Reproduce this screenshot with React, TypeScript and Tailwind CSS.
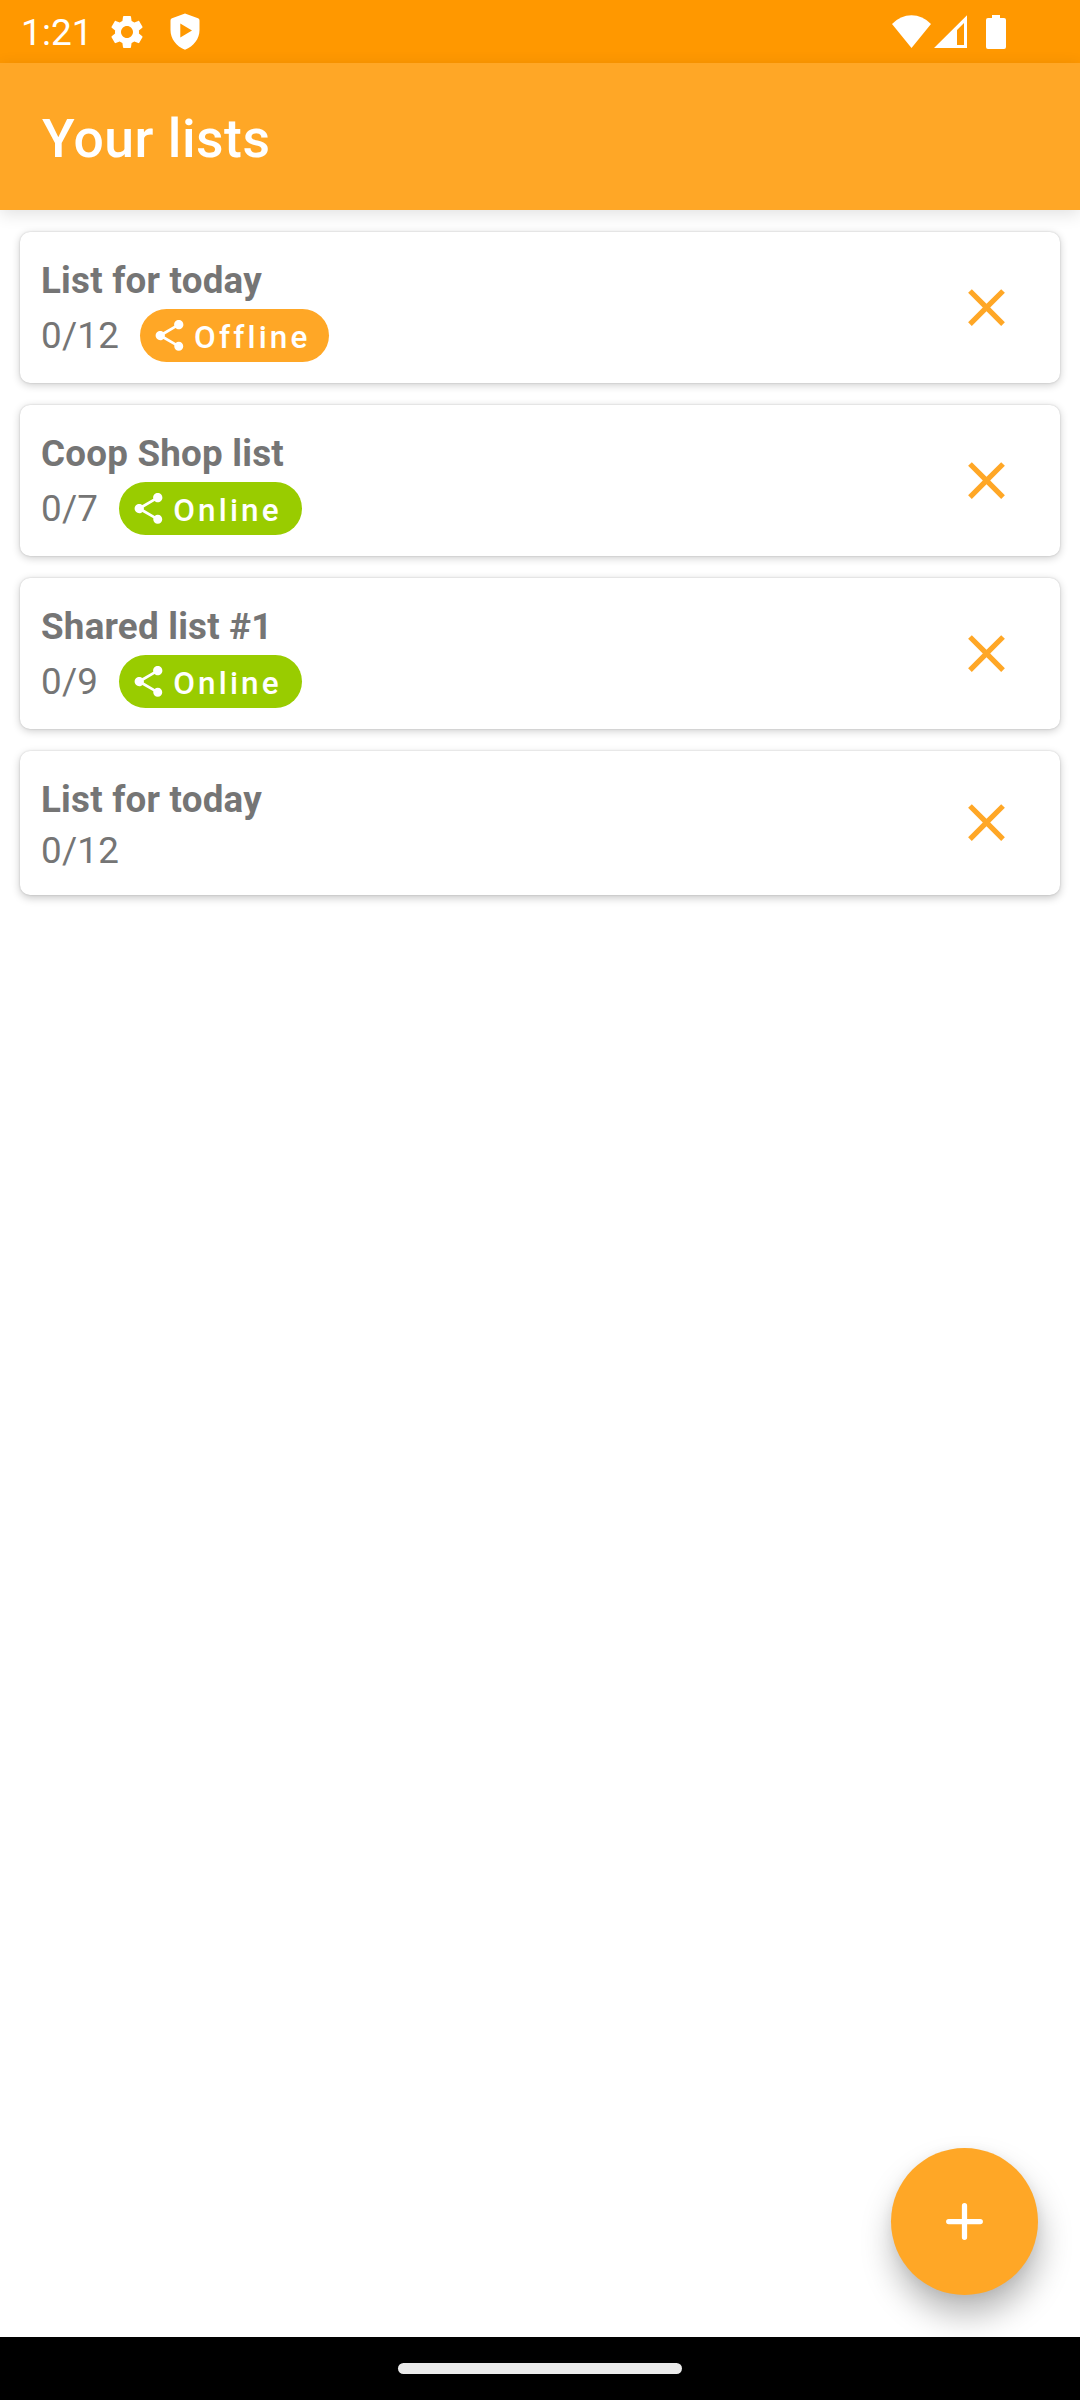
type ShareState = 'online' | 'offline' | null;

interface ShoppingList {
  id: number;
  title: string;
  count: string;
  share: ShareState;
}

const lists: ShoppingList[] = [
  { id: 1, title: 'List for today', count: '0/12', share: 'offline' },
  { id: 2, title: 'Coop Shop list', count: '0/7', share: 'online' },
  { id: 3, title: 'Shared list #1', count: '0/9', share: 'online' },
  { id: 4, title: 'List for today', count: '0/12', share: null },
];

function StatusBar() {
  return (
    <div className="flex h-[63px] shrink-0 items-center bg-[#ff9800] pr-[74px] pl-[21px] text-white">
      <span className="mt-[3px] w-[68px] text-[37px] leading-[44px] tracking-[0.1px]">1:21</span>
      <svg className="ml-[18px] size-[40px]" viewBox="0 0 24 24" fill="currentColor">
        <path d="M19.14 12.94c.04-.3.06-.61.06-.94 0-.32-.02-.64-.07-.94l2.03-1.58c.18-.14.23-.41.12-.61l-1.92-3.32c-.12-.22-.37-.29-.59-.22l-2.39.96c-.5-.38-1.03-.7-1.62-.94l-.36-2.54c-.04-.24-.24-.41-.48-.41h-3.84c-.24 0-.43.17-.47.41l-.36 2.54c-.59.24-1.13.57-1.62.94l-2.39-.96c-.22-.08-.47 0-.59.22L2.74 8.87c-.12.21-.08.47.12.61l2.03 1.58c-.05.3-.09.63-.09.94s.02.64.07.94l-2.03 1.58c-.18.14-.23.41-.12.61l1.92 3.32c.12.22.37.29.59.22l2.39-.96c.5.38 1.03.7 1.62.94l.36 2.54c.05.24.24.41.48.41h3.84c.24 0 .44-.17.47-.41l.36-2.54c.59-.24 1.13-.56 1.62-.94l2.39.96c.22.08.47 0 .59-.22l1.92-3.32c.12-.22.07-.47-.12-.61l-2.01-1.58zM12 15.6c-1.98 0-3.6-1.62-3.6-3.6s1.62-3.6 3.6-3.6 3.6 1.62 3.6 3.6-1.62 3.6-3.6 3.6z" />
      </svg>
      <svg className="ml-[23px] h-[37px] w-[30px]" viewBox="0 0 30 37" fill="currentColor">
        <path fillRule="evenodd" d="M15 .5 28 5.2Q29.5 5.8 29.5 7.4V17C29.5 25.5 23.8 33.6 15 36.7 6.2 33.6.5 25.5.5 17V7.4Q.5 5.8 2 5.2ZM10.3 10.5V24.5L22 17.5Z" />
      </svg>
      <div className="ml-auto flex items-start">
        <svg className="h-[34px] w-[39px]" viewBox="0 0 39 34" fill="currentColor">
          <path d="M0 9Q8.5.3 19.5.3T39 9L19.5 33Z" />
        </svg>
        <svg className="ml-[3px] h-[34px] w-[33px]" viewBox="0 0 33 34" fill="currentColor">
          <path fillRule="evenodd" d="M33 .3V33H0ZM30 8 23 15V30H30Z" />
        </svg>
        <svg className="ml-[19px] h-[34px] w-5" viewBox="0 0 20 34" fill="currentColor">
          <path d="M6 0h8v3h4q2 0 2 2v27q0 2-2 2H2q-2 0-2-2V5q0-2 2-2h4Z" />
        </svg>
      </div>
    </div>
  );
}

function ShareChip({ state }: { state: 'online' | 'offline' }) {
  const online = state === 'online';
  return (
    <span
      className={
        online
          ? 'ml-[21px] flex h-[53px] w-[183px] items-center rounded-full bg-[#99cc00] pl-[11px] text-white'
          : 'ml-[21px] flex h-[53px] w-[189px] items-center rounded-full bg-[#ffa726] pl-[11px] text-white'
      }
    >
      <svg className="size-[37px]" viewBox="0 0 24 24" fill="currentColor">
        <path d="M18 16.08c-.76 0-1.44.3-1.96.77L8.91 12.7c.05-.23.09-.46.09-.7s-.04-.47-.09-.7l7.05-4.11c.54.5 1.25.81 2.04.81 1.66 0 3-1.34 3-3s-1.34-3-3-3-3 1.34-3 3c0 .24.04.47.09.7L8.04 9.81C7.5 9.31 6.79 9 6 9c-1.66 0-3 1.34-3 3s1.34 3 3 3c.79 0 1.5-.31 2.04-.81l7.12 4.16c-.05.21-.08.43-.08.65 0 1.61 1.31 2.92 2.92 2.92s2.92-1.31 2.92-2.92-1.31-2.92-2.92-2.92z" />
      </svg>
      <span className="mt-[5px] ml-[6px] text-[31.5px] leading-[38px] font-medium tracking-[0.1em]">
        {online ? 'Online' : 'Offline'}
      </span>
    </span>
  );
}

function ListCard({ list }: { list: ShoppingList }) {
  return (
    <li
      className={
        list.share
          ? 'flex h-[151px] items-center justify-between rounded-[10px] bg-white pr-[42px] pl-[21px] shadow-[0_2px_8px_rgba(0,0,0,0.2),0_0_2px_rgba(0,0,0,0.18)]'
          : 'flex h-[144px] items-center justify-between rounded-[10px] bg-white pr-[42px] pl-[21px] shadow-[0_3px_9px_rgba(0,0,0,0.22),0_0_2px_rgba(0,0,0,0.18)]'
      }
    >
      <div className="self-start pt-[24px] text-[36.75px] leading-[50px] text-[#757575]">
        <h2 className="font-bold tracking-[0.22px]">{list.title}</h2>
        <div className={list.share ? 'flex h-[59px] items-center' : 'mt-px flex h-[50px] items-center'}>
          <span className="tracking-[0.24px]">{list.count}</span>
          {list.share && <ShareChip state={list.share} />}
        </div>
      </div>
      <button aria-label="Delete list" className={list.share ? 'text-[#ffa726]' : 'mb-[2px] text-[#ffa726]'}>
        <svg className="size-[63px]" viewBox="0 0 24 24" fill="currentColor">
          <path d="M19 6.41 17.59 5 12 10.59 6.41 5 5 6.41 10.59 12 5 17.59 6.41 19 12 13.41 17.59 19 19 17.59 13.41 12z" />
        </svg>
      </button>
    </li>
  );
}

export default function App() {
  return (
    <div className="relative flex h-[2400px] w-[1080px] flex-col overflow-hidden bg-white font-['Roboto',sans-serif]">
      <StatusBar />
      <header className="flex h-[147px] shrink-0 items-center bg-[#ffa726] pl-[42px] text-white shadow-[0_4px_16px_rgba(0,0,0,0.12)]">
        <h1 className="mt-[5px] text-[53.5px] leading-[62px] font-medium tracking-[0.5px]">Your lists</h1>
      </header>
      <main className="flex-1 px-5 pt-[22px]">
        <ul className="flex flex-col gap-[22px]">
          {lists.map((list) => (
            <ListCard key={list.id} list={list} />
          ))}
        </ul>
      </main>
      <button
        aria-label="Add list"
        className="absolute right-[42px] bottom-[105px] flex size-[147px] items-center justify-center rounded-full bg-[#ffa726] text-white shadow-[2px_20px_32px_rgba(0,0,0,0.28),0_2px_12px_rgba(0,0,0,0.06)]"
      >
        <svg className="size-[37px]" viewBox="0 0 37 37" fill="none" stroke="currentColor" strokeWidth="5.25" strokeLinecap="round">
          <path d="M18.5 2.7V34.3M2.7 18.5H34.3" />
        </svg>
      </button>
      <nav className="relative flex h-[63px] shrink-0 items-center justify-center bg-black">
        <div className="h-[11px] w-[284px] rounded-full bg-[#ebebeb]" />
      </nav>
    </div>
  );
}
